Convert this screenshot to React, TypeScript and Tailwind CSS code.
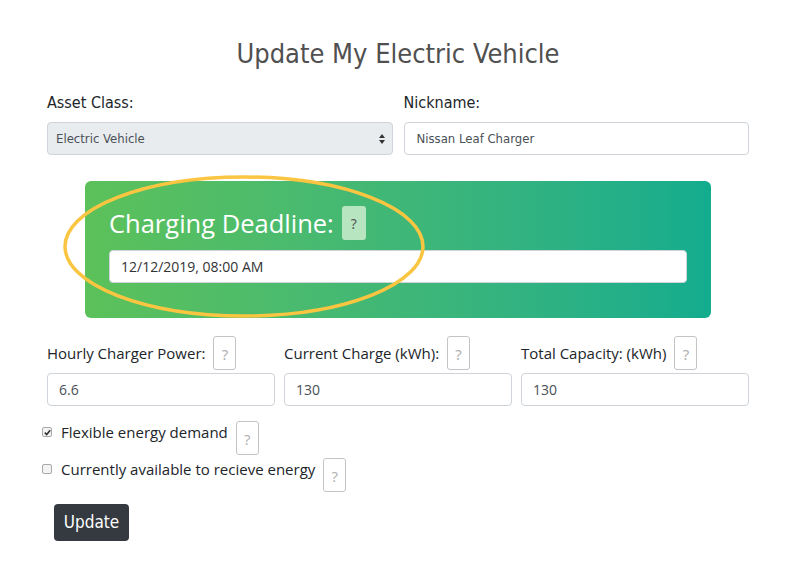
import React from "react";

const cond = "font-['Liberation_Sans_Narrow','DejaVu_Sans_Condensed',Roboto,sans-serif]";
const body = "font-['Open_Sans','Noto_Sans',sans-serif]";

function Help({ className = "" }: { className?: string }) {
  return (
    <span
      className={`inline-flex h-[34px] w-[23px] shrink-0 items-center justify-center rounded-[3px] border border-[#c4c4c4] bg-white pt-[2px] text-[15px] text-[#b0b0b0] ${className}`}
    >
      ?
    </span>
  );
}

function Box({ checked }: { checked?: boolean }) {
  return (
    <span className="relative flex h-[10px] w-[10px] items-center justify-center rounded-[2px] border border-[#a9a9a9] bg-[#f3f3f3]">
      {checked && (
        <svg viewBox="0 0 10 10" className="absolute h-[9px] w-[9px]">
          <path d="M2 5.2 L4.1 7.2 L8 2.6" fill="none" stroke="#333" strokeWidth="1.8" />
        </svg>
      )}
    </span>
  );
}

function NumField({ label, value }: { label: string; value: string }) {
  return (
    <div className="flex flex-col">
      <div className="flex h-[34px] items-center gap-[8px]">
        <span className={`${body} text-[15px] text-[#212529]`}>{label}</span>
        <Help />
      </div>
      <div className={`mt-[3px] flex h-[33px] items-center rounded-[4px] border border-[#ced4da] px-[11px] ${body} text-[14px] text-[#495057]`}>
        {value}
      </div>
    </div>
  );
}

export default function App() {
  return (
    <div className="min-h-[568px] w-[791px] bg-white">
      <div className="ml-[47px] w-[702px] pt-[36px]">
        <h1 className={`${cond} text-center text-[27px] leading-[36px] font-light text-[#505050]`}>
          Update My Electric Vehicle
        </h1>

        <div className="mt-[20px] grid grid-cols-2 gap-[11px]">
          <div className="flex flex-col">
            <label className={`${cond} text-[16px] leading-[22px] text-[#212529]`}>Asset Class:</label>
            <div className={`mt-[8px] flex h-[33px] items-center justify-between rounded-[4px] border border-[#ced4da] bg-[#e9ecef] pl-[8px] pr-[6px] ${cond} text-[13px] text-[#495057]`}>
              <span>Electric Vehicle</span>
              <svg viewBox="0 0 8 12" className="h-[12px] w-[8px]">
                <path d="M4 1 L7 5 L1 5 Z" fill="#333" />
                <path d="M4 11 L7 7 L1 7 Z" fill="#333" />
              </svg>
            </div>
          </div>
          <div className="flex flex-col">
            <label className={`${cond} text-[16px] leading-[22px] text-[#212529]`}>Nickname:</label>
            <div className={`mt-[8px] flex h-[33px] items-center rounded-[4px] border border-[#ced4da] bg-white px-[12px] ${cond} text-[13px] text-[#495057]`}>
              Nissan Leaf Charger
            </div>
          </div>
        </div>

        <div className="relative mx-[38px] mt-[26px] h-[137px] rounded-[6px] bg-gradient-to-r from-[#5cc159] to-[#12ac8e] px-[24px] pt-[25px]">
          <div className="flex items-center gap-[8px]">
            <span className={`${body} text-[25.5px] leading-[34px] font-normal text-white`}>Charging Deadline:</span>
            <span className="inline-flex h-[34px] w-[24px] items-center justify-center rounded-[3px] bg-[#b6e5c0] text-[14px] text-[#555]">?</span>
          </div>
          <div className={`mt-[10px] flex h-[33px] items-center rounded-[4px] border border-[#ced4da] bg-white px-[11px] ${body} text-[14px] text-[#333]`}>
            12/12/2019, 08:00 AM
          </div>
          <svg
            className="pointer-events-none absolute left-[-22px] top-[-6px]"
            width="362"
            height="143"
            viewBox="0 0 362 143"
          >
            <ellipse cx="181" cy="71.5" rx="179" ry="69.5" fill="none" stroke="#fac540" strokeWidth="3.5" />
          </svg>
        </div>

        <div className="mt-[18px] grid grid-cols-3 gap-[9px]">
          <NumField label="Hourly Charger Power:" value="6.6" />
          <NumField label="Current Charge (kWh):" value="130" />
          <NumField label="Total Capacity: (kWh)" value="130" />
        </div>

        <div className={`${body} mt-[15px] flex flex-col gap-[3px] text-[15px] text-[#212529]`}>
          <div className="ml-[-5px] flex items-start">
            <span className="mt-[6px] flex"><Box checked /></span>
            <span className="ml-[9px]">Flexible energy demand</span>
            <Help className="ml-[8px]" />
          </div>
          <div className="ml-[-5px] flex items-start">
            <span className="mt-[6px] flex"><Box /></span>
            <span className="ml-[9px]">Currently available to recieve energy</span>
            <Help className="ml-[8px]" />
          </div>
        </div>

        <button className={`${cond} ml-[7px] mt-[12px] h-[37px] w-[75px] rounded-[4px] bg-[#343a40] text-[17px] text-white`}>
          Update
        </button>
      </div>
    </div>
  );
}
